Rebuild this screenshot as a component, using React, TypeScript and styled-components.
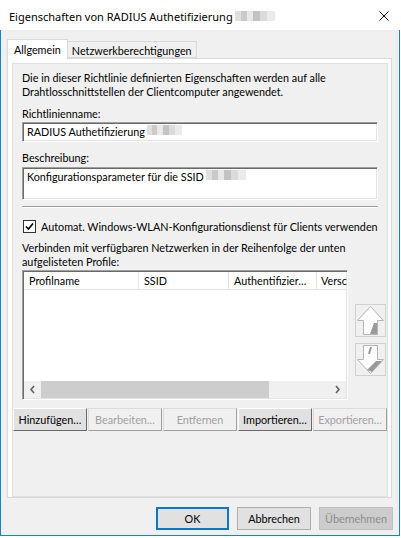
import React from 'react';
import styled, { createGlobalStyle, css } from 'styled-components';

const Global = createGlobalStyle`
  html, body { margin: 0; padding: 0; background: #ffffff; }
  body { font-family: "Lato", "Noto Sans", sans-serif; font-size: 10.8px; color: #000; }
  * { box-sizing: border-box; }
`;

const sunken = css`
  border: 1px solid;
  border-color: #a0a0a0 #ffffff #ffffff #a0a0a0;
  box-shadow: inset 1px 1px 0 #696969, inset -1px -1px 0 #e3e3e3;
  background: #ffffff;
`;

const Window = styled.div`
  width: 400px;
  height: 536px;
  display: flex;
  flex-direction: column;
`;

const TitleBar = styled.div`
  height: 30px;
  background: #ffffff;
  display: flex;
  align-items: center;
  padding: 2px 11px 0 9px;
  font-family: "Noto Sans", sans-serif;
  font-size: 11px;
`;

const TitleText = styled.div`
  flex: 1;
  display: flex;
  align-items: center;
  white-space: nowrap;
`;

const CloseBtn = styled.div`
  width: 10px;
  height: 10px;
  display: flex;
`;

const Body = styled.div`
  flex: 1;
  background: #f0f0f0;
  border: 1px solid #1a7fd6;
  border-top: none;
  display: flex;
  flex-direction: column;
  padding: 8px 6px 0 6px;
`;

const TabStrip = styled.div`
  display: flex;
  align-items: flex-end;
  height: 20px;
  position: relative;
  z-index: 1;
`;

const Tab = styled.div<{ $active?: boolean }>`
  height: ${p => (p.$active ? 20 : 17)}px;
  padding: 0 ${p => (p.$active ? 6 : 4)}px;
  display: flex;
  align-items: center;
  border: 1px solid #d9d9d9;
  border-bottom: ${p => (p.$active ? 'none' : '1px solid #d9d9d9')};
  border-left: ${p => (p.$active ? '1px solid #d9d9d9' : 'none')};
  background: ${p => (p.$active ? '#ffffff' : '#f0f0f0')};
  margin-bottom: ${p => (p.$active ? -1 : 0)}px;
  padding-top: ${p => (p.$active ? 0 : 1)}px;
`;

const Panel = styled.div`
  width: 385px;
  height: 440px;
  border: 1px solid #d9d9d9;
  background: #ffffff;
  padding: 4px 3px 0 4px;
`;

const Page = styled.div`
  background: #f0f0f0;
  border: 1px solid #e0e0e0;
  height: 434px;
  display: flex;
  flex-direction: column;
  padding: 7px 0 0 0;
`;

const Content = styled.div`
  padding: 0 9px 0 9px;
  display: flex;
  flex-direction: column;
`;

const Text = styled.div<{ $mt?: number }>`
  line-height: 14px;
  margin-top: ${p => p.$mt ?? 0}px;
`;

const Field = styled.div<{ $h: number; $mt?: number }>`
  ${sunken};
  height: ${p => p.$h}px;
  margin-top: ${p => p.$mt ?? 0}px;
  padding: 2px 4px;
  line-height: 14px;
  display: flex;
  align-items: flex-start;
`;

const Separator = styled.div`
  height: 2px;
  margin-top: 6px;
  border-top: 1px solid #a0a0a0;
  border-bottom: 1px solid #ffffff;
`;

const CheckRow = styled.div`
  display: flex;
  align-items: center;
  gap: 5px;
  margin-top: 12px;
  padding-left: 1px;
  height: 13px;
`;

const Check = styled.div`
  width: 13px;
  height: 13px;
  border: 1px solid #333333;
  background: #ffffff;
  display: flex;
  align-items: center;
  justify-content: center;
`;

const ListArea = styled.div`
  display: flex;
  margin-top: 1px;
  gap: 7px;
`;

const ListBox = styled.div`
  ${sunken};
  width: 326px;
  flex-shrink: 0;
  height: 130px;
  display: flex;
  flex-direction: column;
  padding: 1px 0 1px 1px;
  overflow: hidden;
`;

const Header = styled.div`
  display: flex;
  height: 18px;
  border-bottom: 1px solid #e5e5e5;
  flex-shrink: 0;
`;

const Col = styled.div<{ $w: number }>`
  width: ${p => p.$w}px;
  flex-shrink: 0;
  border-right: 1px solid #e5e5e5;
  padding-left: 5px;
  display: flex;
  align-items: center;
  white-space: nowrap;
  overflow: hidden;
`;

const LastCol = styled(Col)`
  border-right: none;
  padding-left: 4px;
`;

const ListBody = styled.div`
  flex: 1;
`;

const HScroll = styled.div`
  height: 17px;
  background: #f0f0f0;
  display: flex;
  align-items: center;
  margin-right: 1px;
`;

const ScrollArrow = styled.div`
  width: 17px;
  height: 17px;
  display: flex;
  align-items: center;
  justify-content: center;
`;

const ScrollTrack = styled.div`
  flex: 1;
  height: 17px;
  display: flex;
`;

const Thumb = styled.div`
  width: 228px;
  height: 100%;
  background: #cdcdcd;
`;

const SideButtons = styled.div`
  display: flex;
  flex-direction: column;
  flex-shrink: 0;
  gap: 6px;
  padding-top: 34px;
`;

const ArrowBtn = styled.div`
  width: 31px;
  height: 33px;
  border: 1px solid #d0d0d0;
  background: #f0f0f0;
  display: flex;
  align-items: center;
  justify-content: center;
`;

const ButtonRow = styled.div`
  display: flex;
  gap: 1px;
  margin-top: 8px;
`;

const Button = styled.button<{ $disabled?: boolean; $default?: boolean; $w?: number }>`
  width: ${p => p.$w ?? 74}px;
  height: 23px;
  font: inherit;
  padding: 0;
  color: ${p => (p.$disabled ? '#8d8d8d' : '#000000')};
  background: ${p => (p.$disabled ? '#cccccc' : '#e1e1e1')};
  border: ${p => (p.$default ? '2px solid #0078d7' : p.$disabled ? '1px solid #bfbfbf' : '1px solid #adadad')};
  white-space: nowrap;
  overflow: hidden;
`;

const SmallButton = styled(Button)`
  background: ${p => (p.$disabled ? '#f0f0f0' : '#e1e1e1')};
  border: 1px solid ${p => (p.$disabled ? '#cfcfcf' : '#adadad')};
  border-color: ${p => (p.$disabled ? '#dcdcdc #a0a0a0 #a0a0a0 #dcdcdc' : '#ffffff #696969 #696969 #ffffff')};
  color: ${p => (p.$disabled ? '#a0a0a0' : '#000000')};
`;

const DialogButtons = styled.div`
  display: flex;
  justify-content: flex-end;
  gap: 8px;
  margin-top: 9px;
`;

const Blur = styled.span<{ $w: number }>`
  display: inline-block;
  width: ${p => p.$w}px;
  height: 10px;
  margin-left: 2px;
  background:
    linear-gradient(90deg, #dcdcdc 0 15%, #c4c4c4 15% 30%, #e6e6e6 30% 45%, #bcbcbc 45% 62%, #d6d6d6 62% 80%, #e8e8e8 80% 100%);
  opacity: 0.9;
`;

const UpIcon = () => (
  <svg width="29" height="31" viewBox="0 0 29 31">
    <polygon points="14.5,1.5 1.5,15.5 7.5,15.5 7.5,29.5 21.5,29.5 21.5,15.5 27.5,15.5" fill="#ffffff" stroke="#b4b4b4" />
    <polygon points="14,29 21,29 21,18 18,18" fill="#9a9a9a" />
  </svg>
);

const DownIcon = () => (
  <svg width="29" height="31" viewBox="0 0 29 31">
    <polygon points="7.5,1.5 21.5,1.5 21.5,15.5 27.5,15.5 14.5,29.5 1.5,15.5 7.5,15.5" fill="#ffffff" stroke="#b4b4b4" />
    <polygon points="14,3 16,3 14,10 12,10" fill="#9a9a9a" />
    <polygon points="20,17 26,17 16,28 11,26" fill="#9a9a9a" />
  </svg>
);

const Chevron = ({ dir }: { dir: 'l' | 'r' }) => (
  <svg width="7" height="9" viewBox="0 0 7 9">
    <polyline points={dir === 'l' ? '5,1 2,4.5 5,8' : '2,1 5,4.5 2,8'} fill="none" stroke="#606060" strokeWidth="1.6" />
  </svg>
);

export default function App() {
  return (
    <>
      <Global />
      <Window>
        <TitleBar>
          <TitleText>
            Eigenschaften von RADIUS Authetifizierung<Blur $w={40} />
          </TitleText>
          <CloseBtn>
            <svg width="10" height="10" viewBox="0 0 10 10">
              <path d="M0.5 0.5 L9.5 9.5 M9.5 0.5 L0.5 9.5" stroke="#000" strokeWidth="1" />
            </svg>
          </CloseBtn>
        </TitleBar>
        <Body>
          <TabStrip>
            <Tab $active>Allgemein</Tab>
            <Tab>Netzwerkberechtigungen</Tab>
          </TabStrip>
          <Panel>
            <Page>
              <Content>
                <Text>
                  Die in dieser Richtlinie definierten Eigenschaften werden auf alle
                  <br />
                  Drahtlosschnittstellen der Clientcomputer angewendet.
                </Text>
                <Text $mt={8}>Richtlinienname:</Text>
                <Field $h={20} $mt={1}>
                  RADIUS Authetifizierung<Blur $w={35} />
                </Field>
                <Text $mt={9}>Beschreibung:</Text>
                <Field $h={33} $mt={2}>
                  Konfigurationsparameter für die SSID<Blur $w={40} />
                </Field>
                <Separator />
                <CheckRow>
                  <Check>
                    <svg width="9" height="9" viewBox="0 0 9 9">
                      <polyline points="1,4.5 3.5,7 8,1.5" fill="none" stroke="#000" strokeWidth="1.6" />
                    </svg>
                  </Check>
                  <span>Automat. Windows-WLAN-Konfigurationsdienst für Clients verwenden</span>
                </CheckRow>
                <Text $mt={8}>
                  Verbinden mit verfügbaren Netzwerken in der Reihenfolge der unten
                  <br />
                  aufgelisteten Profile:
                </Text>
                <ListArea>
                  <ListBox>
                    <Header>
                      <Col $w={115}>Profilname</Col>
                      <Col $w={90}>SSID</Col>
                      <Col $w={88}>Authentifizier…</Col>
                      <LastCol $w={31}>Versc</LastCol>
                    </Header>
                    <ListBody />
                    <HScroll>
                      <ScrollArrow>
                        <Chevron dir="l" />
                      </ScrollArrow>
                      <ScrollTrack>
                        <Thumb />
                      </ScrollTrack>
                      <ScrollArrow>
                        <Chevron dir="r" />
                      </ScrollArrow>
                    </HScroll>
                  </ListBox>
                  <SideButtons>
                    <ArrowBtn>
                      <UpIcon />
                    </ArrowBtn>
                    <ArrowBtn>
                      <DownIcon />
                    </ArrowBtn>
                  </SideButtons>
                </ListArea>
              </Content>
              <ButtonRow>
                <SmallButton>Hinzufügen…</SmallButton>
                <SmallButton $disabled>Bearbeiten…</SmallButton>
                <SmallButton $disabled>Entfernen</SmallButton>
                <SmallButton>Importieren…</SmallButton>
                <SmallButton $disabled>Exportieren…</SmallButton>
              </ButtonRow>
            </Page>
          </Panel>
          <DialogButtons>
            <Button $default $w={73}>OK</Button>
            <Button $w={74}>Abbrechen</Button>
            <Button $disabled $w={74}>Übernehmen</Button>
          </DialogButtons>
        </Body>
      </Window>
    </>
  );
}
